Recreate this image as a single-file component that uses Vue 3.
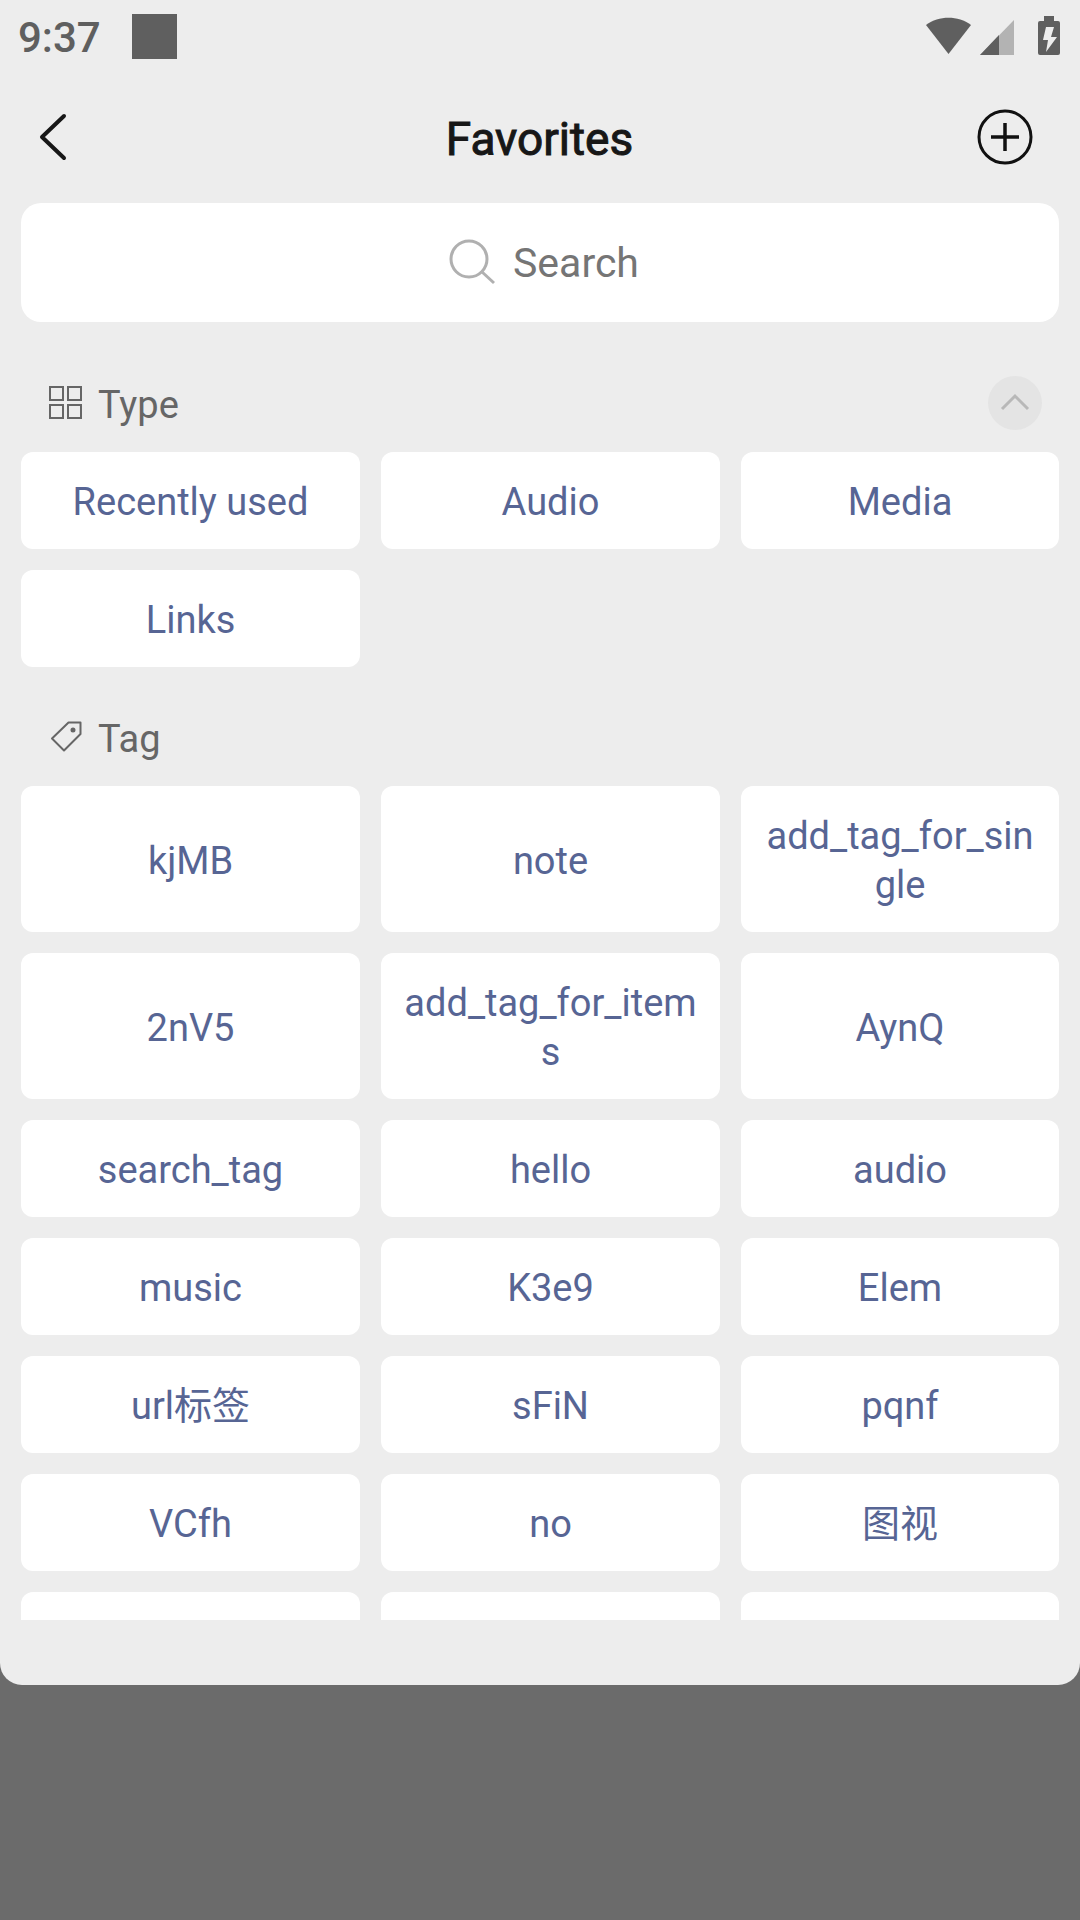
<script setup>
import { ref } from 'vue'

const query = ref('')
const types = ['Recently used', 'Audio', 'Media', 'Links']
const tags = [
  'kjMB', 'note', 'add_tag_for_single',
  '2nV5', 'add_tag_for_items', 'AynQ',
  'search_tag', 'hello', 'audio',
  'music', 'K3e9', 'Elem',
  'url标签', 'sFiN', 'pqnf',
  'VCfh', 'no', '图视',
]
</script>

<template>
  <div class="page">
    <main class="sheet">
      <div class="status">
        <span class="time">9:37</span>
        <span class="notice"></span>
        <span class="spacer"></span>
        <svg class="indicators" width="136" height="40" viewBox="0 0 136 40" aria-hidden="true">
          <path fill="#5f5f5f" d="M1 9C14 -.6 33 -.6 46 9L23.500 38Z" />
          <path fill="#b3b3b3" d="M55 39 89 4V39Z" />
          <path fill="#5f5f5f" d="M55 39 74 19V39Z" />
          <path fill="#5f5f5f" d="M119 0h10v5h4q2 0 2 2v30q0 2-2 2h-18q-2 0-2-2V7q0-2 2-2h4z" />
          <path fill="#ededed" d="M121 11h8l-3 10h6l-11 15 2-12h-5z" />
        </svg>
      </div>

      <header class="bar">
        <button class="icon-button" type="button" aria-label="Back">
          <svg width="56" height="56" viewBox="0 0 56 56" fill="none" stroke="#171717" stroke-width="4">
            <path d="M38 6 16 27 38 48" stroke-linecap="round" stroke-linejoin="round" />
          </svg>
        </button>
        <h1>Favorites</h1>
        <button class="icon-button" type="button" aria-label="Add">
          <svg width="56" height="56" viewBox="0 0 56 56" fill="none" stroke="#111">
            <circle cx="28" cy="27" r="26" stroke-width="3" />
            <path d="M28 13V41M14 27H42" stroke-width="3.500" />
          </svg>
        </button>
      </header>

      <label class="search">
        <svg width="46" height="46" viewBox="0 0 46 46" fill="none" stroke="#b0b0b0" stroke-width="3" aria-hidden="true">
          <circle cx="20" cy="19" r="18" />
          <path d="M32 31 45 43" />
        </svg>
        <input v-model="query" type="text" placeholder="Search" aria-label="Search" />
      </label>

      <div class="list">
        <section>
          <div class="head">
            <svg width="34" height="34" viewBox="0 0 34 34" fill="none" stroke="#666" stroke-width="2" aria-hidden="true">
              <path d="M2 1H15V14H2ZM20 1H33V14H20ZM2 19H15V32H2ZM20 19H33V32H20Z" />
            </svg>
            <h2>Type</h2>
            <button class="collapse" type="button" aria-label="Collapse">
              <svg width="54" height="54" viewBox="0 0 54 54" fill="none" stroke="#b8b8b8" stroke-width="3">
                <path d="M14 33 27 20 40 33" />
              </svg>
            </button>
          </div>
          <ul class="grid">
            <li v-for="name in types" :key="name">
              <button class="chip" type="button">{{ name }}</button>
            </li>
          </ul>
        </section>

        <section>
          <div class="head">
            <svg width="34" height="34" viewBox="0 0 34 34" fill="none" stroke="#666" stroke-width="2" aria-hidden="true">
              <path d="M20.500 2.500H32.500V14L16 30.500 4 18.500Z" stroke-linejoin="round" />
              <circle cx="25" cy="10" r="1.500" fill="#666" />
            </svg>
            <h2>Tag</h2>
          </div>
          <ul class="grid">
            <li v-for="name in tags" :key="name">
              <button class="chip" type="button">{{ name }}</button>
            </li>
            <li v-for="n in 3" :key="n" aria-hidden="true">
              <span class="chip"></span>
            </li>
          </ul>
        </section>
      </div>
    </main>
  </div>
</template>

<style>
body {
  margin: 0;
}
</style>

<style scoped>
.page {
  height: 100vh;
  background: #6b6b6b;
  font-family: Roboto, "Noto Sans CJK SC", sans-serif;
}

.sheet {
  display: flex;
  flex-direction: column;
  box-sizing: border-box;
  height: calc(100vh - 235px);
  padding-bottom: 65px;
  border-radius: 0 0 22px 22px;
  background: #ededed;
  overflow: hidden;
}

button {
  margin: 0;
  padding: 0;
  border: 0;
  background: none;
  font: inherit;
}

svg {
  display: block;
  flex: none;
  overflow: visible;
}

.status {
  display: flex;
  align-items: center;
  flex: none;
  height: 72px;
  padding: 0 19px 0 18px;
  color: #5f5f5f;
}

.time {
  width: 114px;
  padding-top: 2px;
  font-size: 42px;
  font-weight: 500;
}

.notice {
  width: 45px;
  height: 45px;
  background: #5f5f5f;
}

.spacer {
  flex: 1;
}

.bar {
  display: grid;
  grid-template-columns: 56px 1fr 56px;
  align-items: center;
  flex: none;
  height: 131px;
  padding: 0 47px 0 26px;
}

h1 {
  margin: 0;
  padding: 2px 0 0 20px;
  font-size: 46px;
  font-weight: 400;
  text-align: center;
  color: #171717;
  -webkit-text-stroke: 1px #171717;
}

.search {
  display: flex;
  align-items: center;
  justify-content: center;
  flex: none;
  gap: 18px;
  box-sizing: border-box;
  height: 119px;
  margin: 0 21px 32px;
  padding-left: 12px;
  border-radius: 20px;
  background: #fff;
}

.search input {
  width: 130px;
  padding: 0;
  border: 0;
  outline: 0;
  background: none;
  font-family: inherit;
  font-size: 41px;
  color: #171717;
}

.search input::placeholder {
  color: #757575;
  opacity: 1;
}

.list {
  flex: 1;
  min-height: 0;
  overflow: hidden;
}

.head {
  display: flex;
  align-items: center;
  height: 98px;
  padding: 0 38px 0 48px;
}

h2 {
  flex: 1;
  margin: 0 0 0 16px;
  padding-top: 4px;
  font-size: 38px;
  font-weight: 400;
  color: #666;
}

.collapse {
  border-radius: 50%;
  background: #e4e4e4;
}

.grid {
  display: grid;
  grid-template-columns: repeat(3, 1fr);
  margin: 0;
  padding: 0;
  list-style: none;
}

.grid li {
  display: flex;
  margin: 0 0 21px 21px;
}

.grid li:nth-child(3n) {
  margin-right: 21px;
}

.chip {
  flex: 1;
  box-sizing: border-box;
  min-height: 97px;
  padding: 26px 20px 22px;
  border-radius: 12px;
  background: #fff;
  font-size: 38px;
  line-height: 49px;
  text-align: center;
  word-break: break-all;
  color: #576594;
}
</style>
